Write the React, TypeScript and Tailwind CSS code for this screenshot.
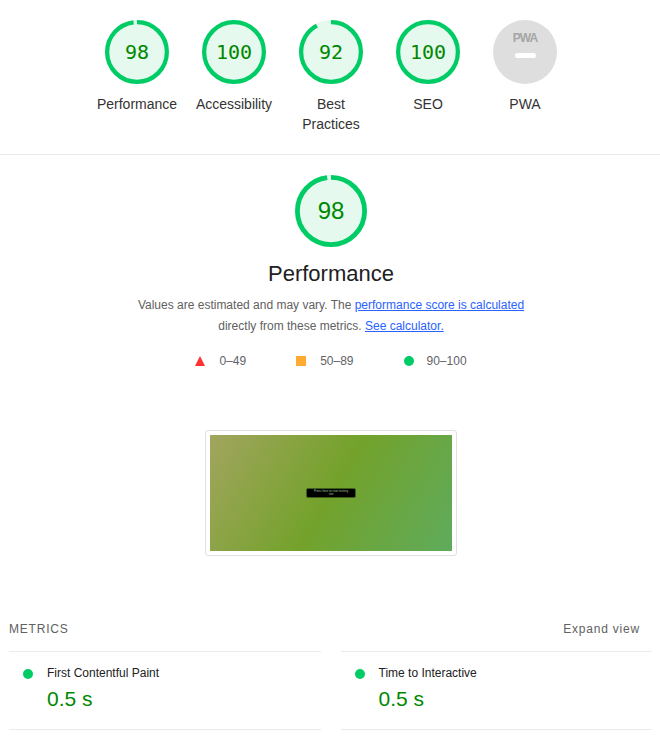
import React from "react"

const CIRC = 2 * Math.PI * 56

const summary = [
  { label: "Performance", score: 98 },
  { label: "Accessibility", score: 100 },
  { label: "Best Practices", score: 92 },
  { label: "SEO", score: 100 },
]

const metrics = [
  { title: "First Contentful Paint", value: "0.5 s" },
  { title: "Time to Interactive", value: "0.5 s" },
]

function Gauge(props: { score: number; big?: boolean }) {
  return (
    <div className={props.big ? "relative h-[72px] w-[72px]" : "relative h-16 w-16"}>
      <svg viewBox="0 0 120 120" className="h-full w-full">
        <circle cx="60" cy="60" r="60" fill="#e6f9ef" />
        <circle
          cx="60"
          cy="60"
          r="56"
          fill="none"
          stroke="#00cc66"
          strokeWidth="8"
          strokeDasharray={`${(props.score / 100) * CIRC} ${CIRC}`}
          transform="rotate(-90 60 60)"
        />
      </svg>
      <div
        className={
          props.big
            ? "absolute inset-0 flex items-center justify-center text-[24px] text-[#008800]"
            : "absolute inset-0 flex items-center justify-center font-['DejaVu_Sans_Mono',monospace] text-[20px] text-[#008800]"
        }
      >
        {props.score}
      </div>
    </div>
  )
}

function PwaGauge() {
  return (
    <div className="flex h-16 w-16 flex-col items-center rounded-full bg-[#dedede]">
      <div className="mt-[12px] text-[12px] font-bold leading-[12px] tracking-[-1px] text-[#a6a6a6]">PWA</div>
      <div className="mt-[9px] h-[5px] w-[21px] rounded-full bg-white" />
    </div>
  )
}

export default function App() {
  return (
    <div className="min-h-[739px] bg-white font-['Liberation_Sans',Arial,sans-serif] text-[#212121]">
      <div className="flex justify-center border-b border-[#ebebeb] pt-5 pb-5 pl-[2px]">
        {summary.map((s) => (
          <div key={s.label} className="flex w-[97px] flex-col items-center">
            <Gauge score={s.score} />
            <div className="mt-[10px] w-[82px] text-center text-[14px] leading-5 text-[#333]">{s.label}</div>
          </div>
        ))}
        <div className="flex w-[97px] flex-col items-center">
          <PwaGauge />
          <div className="mt-[10px] w-[82px] text-center text-[14px] leading-5 text-[#333]">PWA</div>
        </div>
      </div>

      <div className="flex flex-col items-center pt-5 pl-[2px]">
        <Gauge score={98} big />
        <div className="mt-[13px] text-[22px] leading-7 text-[#212121]">Performance</div>
        <p className="mt-[7px] w-[410px] text-center text-[12px] leading-[21px] text-[#616161]">
          Values are estimated and may vary. The{" "}
          <a href="#" className="text-[#2962ff] underline">performance score is calculated</a> directly from these
          metrics.{" "}
          <a href="#" className="text-[#2962ff] underline">See calculator.</a>
        </p>

        <div className="mt-[14px] flex items-center gap-[50px] text-[12px] leading-5 text-[#5f6368]">
          <div className="flex items-center gap-[14px]">
            <svg width="10" height="10" viewBox="0 0 10 10">
              <polygon points="5,0 10,10 0,10" fill="#ff3333" />
            </svg>
            <span>0–49</span>
          </div>
          <div className="flex items-center gap-[14px]">
            <div className="h-[10px] w-[10px] bg-[#ffaa33]" />
            <span>50–89</span>
          </div>
          <div className="flex items-center gap-[13px]">
            <div className="h-[10px] w-[10px] rounded-full bg-[#00cc66]" />
            <span>90–100</span>
          </div>
        </div>

        <div className="mt-[59px] rounded-[3px] border border-[#e0e0e0] p-1">
          <div className="flex h-[116px] w-[242px] items-center justify-center bg-[linear-gradient(120deg,#a2a55e_0%,#73a22b_50%,#5fab5c_100%)]">
            <div className="flex h-[10px] w-[50px] flex-col items-center justify-center rounded-[2px] border border-[#3d5f1c] bg-black text-[3px] leading-[3px] text-[#9fc49f]">
              <span>Press here to start testing</span>
              <span>site</span>
            </div>
          </div>
        </div>
      </div>

      <div className="mt-[63px] pl-[9px] pr-[8px]">
        <div className="flex items-center justify-between text-[12px] leading-5 tracking-[0.8px] text-[#616161]">
          <span>METRICS</span>
          <button className="pr-3 tracking-[0.8px]">Expand view</button>
        </div>
        <div className="mt-[12px] grid grid-cols-2 gap-x-5">
          {metrics.map((m) => (
            <div key={m.title} className="flex border-y border-[#ebebeb] pt-[11px] pb-[17px]">
              <div className="mx-[14px] mt-[6px] h-[10px] w-[10px] shrink-0 rounded-full bg-[#00cc66]" />
              <div className="flex flex-col">
                <div className="text-[12px] leading-5 text-[#212121]">{m.title}</div>
                <div className="mt-[3px] text-[21px] leading-[26px] text-[#008800]">{m.value}</div>
              </div>
            </div>
          ))}
        </div>
      </div>
    </div>
  )
}
